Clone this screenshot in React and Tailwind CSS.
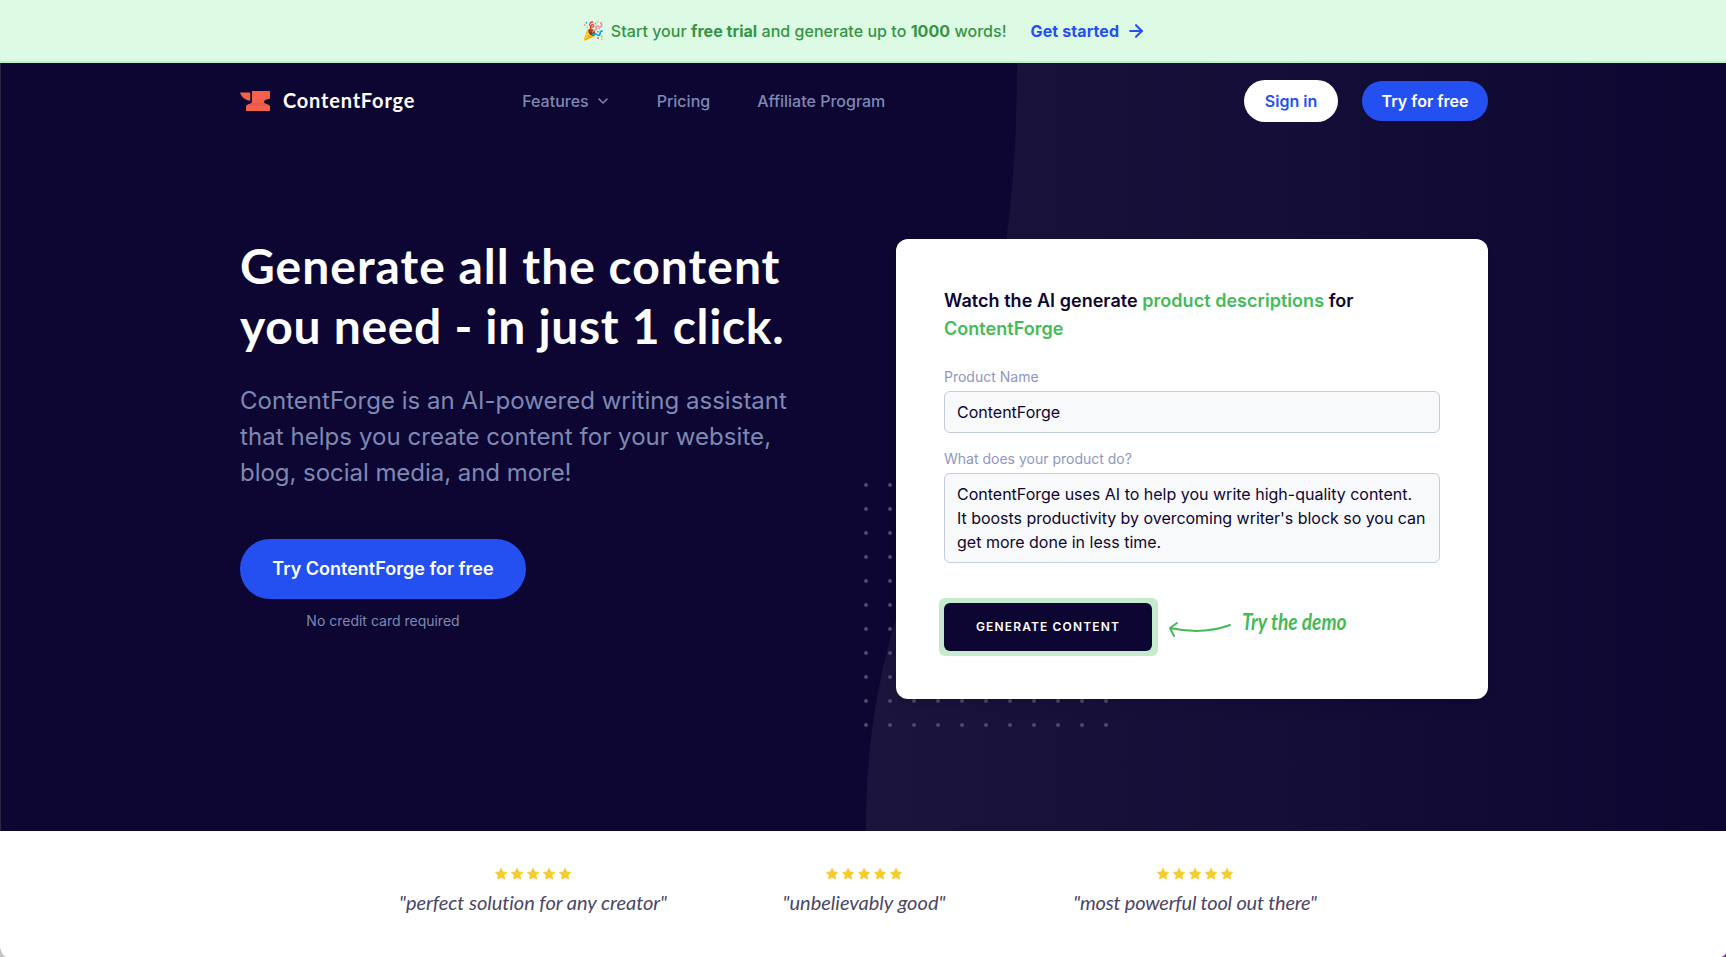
import { ArrowRight, ChevronDown } from "lucide-react";

const STAR = "M8 0.9l2.1 4.4 4.8.6-3.5 3.3.9 4.8L8 11.7 3.7 14l.9-4.8L1.1 5.9l4.8-.6z";

function Stars() {
  return (
    <div className="flex">
      {[0, 1, 2, 3, 4].map((i) => (
        <svg key={i} className="size-4" viewBox="0 0 16 16" fill="#f7cb2d" stroke="#f7cb2d" strokeWidth="1" strokeLinejoin="round">
          <path transform="translate(1.5 1.6) scale(.82)" d={STAR} />
        </svg>
      ))}
    </div>
  );
}

function Quote({ text, textClass = "" }) {
  return (
    <div className="flex w-[331px] flex-col items-center">
      <Stars />
      <p className={`mt-[6px] whitespace-nowrap font-[Lato] text-[20px] leading-7 text-[#4b4668] italic [font-variant-ligatures:none] ${textClass}`}>{text}</p>
    </div>
  );
}

function Logo() {
  return (
    <div className="flex items-center">
      <svg className="h-5 w-[30px]" viewBox="0 0 30 20">
        <path fill="#f3604b" d="M0 1.500h10.300v8.300C5.500 9.400 1.500 6.500 0 1.500z" />
        <path fill="#f3604b" d="M12 0h18v7.800c-3.500.3-6 1.600-6 3.200 0 1.400 1.500 1.900 3.500 2.600 1.600.5 2.500 1.200 2.500 2.400v4H6v-4c0-1.200.7-1.900 2-2.400 2.500-.8 4-1.300 4-3.600z" />
        <path fill="#e85a48" d="M11.500 12h12.700c.6.700 1.800 1.100 3.300 1.600.9.300 1.600.6 2 1.100H6.600c.3-.5.800-.8 1.400-1.100 1.500-.5 2.800-.8 3.500-1.600z" />
      </svg>
      <span className="-mt-0.5 ml-[13px] font-[Lato] text-[20px] font-bold tracking-[0.8px] text-white">ContentForge</span>
    </div>
  );
}

function Dots() {
  return (
    <svg className="absolute top-[420px] left-[863px] h-[250px] w-[246px]" fill="#4f4a6c">
      {Array.from({ length: 121 }, (_, i) => (
        <circle key={i} cx={2 + (i % 11) * 24} cy={2 + Math.floor(i / 11) * 24} r="2" />
      ))}
    </svg>
  );
}

export default function App() {
  return (
    <div className="relative flex h-[957px] w-[1726px] flex-col overflow-hidden bg-white font-[Inter,sans-serif]">
      <div className="flex h-[63px] shrink-0 items-center justify-center border-b-2 border-[#b9f5c9] bg-[#dcfae4] pl-0.5 text-[16px] text-[#369443]">
        <span className="mr-[7px] text-[18px]">🎉</span>
        <span className="font-medium tracking-[0.04px]">Start your <b className="font-bold">free trial</b> and generate up to <b className="font-bold">1000</b> words!</span>
        <a className="ml-6 flex items-center gap-[7px] font-bold tracking-[0.1px] text-[#2450f2]">Get started <ArrowRight size={20} strokeWidth={2.500} /></a>
      </div>

      <div className="relative h-[768px] shrink-0 border-l border-[#2b2648] bg-[#0d0632] pl-px">
        <svg className="absolute inset-0 h-full w-full" viewBox="1 63 1725 768">
          <defs>
            <linearGradient id="glow" gradientUnits="userSpaceOnUse" x1="866" x2="1726" y1="0" y2="0">
              <stop offset="0" stopColor="#1b153d" />
              <stop offset="1" stopColor="#0d0632" />
            </linearGradient>
          </defs>
          <path fill="url(#glow)" d="M1017 63C1017 485 866 526 866 831H1726V63z" />
        </svg>
        <Dots />

        <div className="relative mx-auto flex w-[1248px] flex-col">
          <nav className="flex h-[76px] items-center text-[16px] text-[#7f88b3]">
            <Logo />
            <div className="ml-[107px] flex items-center gap-[46px] font-medium">
              <span className="flex items-center gap-[6px]">Features <ChevronDown size={16} strokeWidth={2.200} /></span>
              <span>Pricing</span>
              <span className="ml-px">Affiliate Program</span>
            </div>
            <div className="ml-auto flex items-center gap-6 font-semibold">
              <a className="flex h-[42px] w-[94px] items-center justify-center rounded-full bg-white text-[#2450f2]">Sign in</a>
              <a className="flex h-10 w-[126px] items-center justify-center rounded-full bg-[#2450f2] text-white">Try for free</a>
            </div>
          </nav>

          <main className="mt-[100px] flex justify-between">
            <div className="flex w-[580px] flex-col items-start">
              <h1 className="-mt-[3px] font-[Lato] text-[48px] leading-[60px] font-bold whitespace-nowrap text-white">
                <span className="block tracking-[1px]">Generate all the content</span>
                <span className="block tracking-[0.7px]">you need - in just 1 click.</span>
              </h1>
              <p className="mt-[27px] text-[24px] leading-9 whitespace-nowrap text-[#7f88b3]">
                <span className="tracking-[0.02px]">ContentForge is an AI-powered writing assistant</span><br /><span className="tracking-[0.06px]">that helps you create content for your website,</span><br /><span className="tracking-[-0.04px]">blog, social media, and more!</span>
              </p>
              <div className="mt-12 flex w-[286px] flex-col items-center">
                <a className="flex h-[60px] w-full items-center justify-center rounded-full bg-[#2450f2] pb-px text-[18px] font-semibold text-white">Try ContentForge for free</a>
                <span className="mt-3 text-[14px] leading-5 text-[#7f88b3]">No credit card required</span>
              </div>
            </div>

            <section className="h-[460px] w-[592px] rounded-xl bg-white p-12 text-[#0d0632] shadow-lg">
              <h2 className="text-[18px] leading-7 font-semibold tracking-[0.04px]">
                Watch the AI generate <span className="text-[#44bb58]">product descriptions</span> for<br />
                <span className="text-[#44bb58]">ContentForge</span>
              </h2>
              <div className="mt-6 text-[14px] leading-5 text-[#8e97bf]">Product Name</div>
              <div className="mt-1 flex h-[42px] items-center rounded-md border border-[#c4cbdc] bg-[#f8f9fb] px-3 text-[16px]">ContentForge</div>
              <div className="mt-4 text-[14px] leading-5 text-[#8e97bf]">What does your product do?</div>
              <div className="mt-1 h-[90px] rounded-md border border-[#c4cbdc] bg-[#f8f9fb] px-3 py-2 text-[16px] leading-6 whitespace-nowrap">
                ContentForge uses AI to help you write high-quality content.<br /><span className="tracking-[-0.03px]">It boosts productivity by overcoming writer's block so you can</span><br />get more done in less time.
              </div>
              <div className="mt-[35px] -ml-[5px] flex items-center">
                <div className="rounded-md bg-[#c5ebcc] p-[5px] pr-[6px]">
                  <button className="block h-12 w-[208px] rounded-md bg-[#0d0632] text-[12px] font-semibold tracking-[1.150px] text-white">GENERATE CONTENT</button>
                </div>
                <svg className="mt-0.5 ml-[10px] h-5 w-[64px]" viewBox="0 0 64 20" fill="none" stroke="#44bb58" strokeWidth="2" strokeLinecap="round" strokeLinejoin="round">
                  <path d="M62 7Q35 17 2 10M9 5L2 10L6 18" />
                </svg>
                <span className="ml-[10px] origin-left -translate-y-[6px] scale-x-[0.87] font-[Lato] text-[22px] font-bold text-[#44bb58] italic">Try the demo</span>
              </div>
            </section>
          </main>
        </div>
      </div>

      <div className="flex justify-center pt-[35px] pl-0.5">
        <Quote text={'"perfect solution for any creator"'} textClass="tracking-[-0.05px]" />
        <Quote text={'"unbelievably good"'} />
        <Quote text={'"most powerful tool out there"'} textClass="tracking-[-0.2px]" />
      </div>

      <svg className="absolute bottom-0 left-0 h-[10px] w-[6px]" viewBox="0 0 6 10">
        <path fill="#c4c4c4" d="M0 0Q1 7 6 10H0z" />
      </svg>
      <svg className="absolute right-0 bottom-0 h-[4px] w-[5px]" viewBox="0 0 5 4">
        <path fill="#6b2a8c" d="M5 0Q4 3 0 4H5z" />
      </svg>
    </div>
  );
}
